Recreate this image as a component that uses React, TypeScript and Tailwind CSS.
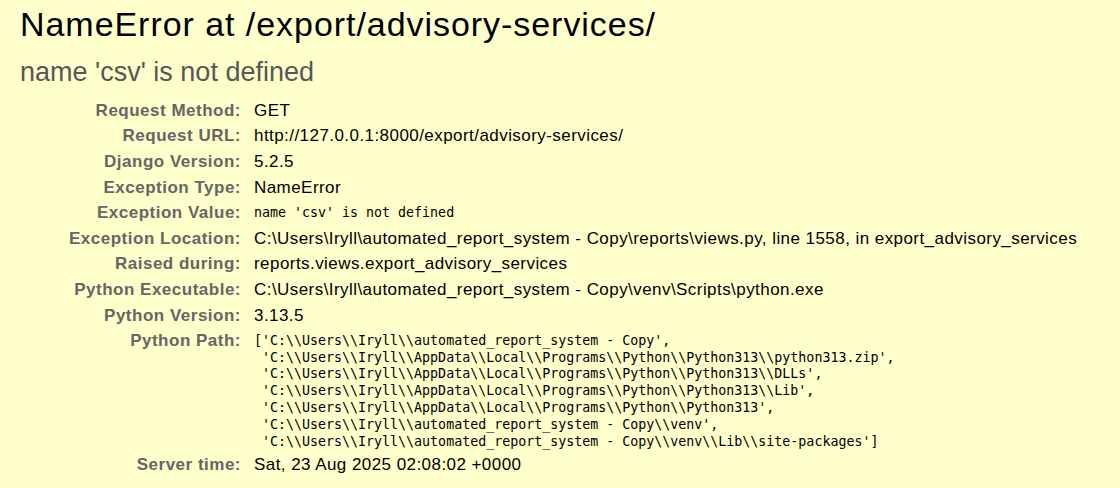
const rows: [string, string, boolean?][] = [
  ["Request Method:", "GET"],
  ["Request URL:", "http://127.0.0.1:8000/export/advisory-services/"],
  ["Django Version:", "5.2.5"],
  ["Exception Type:", "NameError"],
  ["Exception Value:", "name 'csv' is not defined", true],
  ["Exception Location:", "C:\\Users\\Iryll\\automated_report_system - Copy\\reports\\views.py, line 1558, in export_advisory_services"],
  ["Raised during:", "reports.views.export_advisory_services"],
  ["Python Executable:", "C:\\Users\\Iryll\\automated_report_system - Copy\\venv\\Scripts\\python.exe"],
  ["Python Version:", "3.13.5"],
]

const pythonPath = `['C:\\\\Users\\\\Iryll\\\\automated_report_system - Copy',
 'C:\\\\Users\\\\Iryll\\\\AppData\\\\Local\\\\Programs\\\\Python\\\\Python313\\\\python313.zip',
 'C:\\\\Users\\\\Iryll\\\\AppData\\\\Local\\\\Programs\\\\Python\\\\Python313\\\\DLLs',
 'C:\\\\Users\\\\Iryll\\\\AppData\\\\Local\\\\Programs\\\\Python\\\\Python313\\\\Lib',
 'C:\\\\Users\\\\Iryll\\\\AppData\\\\Local\\\\Programs\\\\Python\\\\Python313',
 'C:\\\\Users\\\\Iryll\\\\automated_report_system - Copy\\\\venv',
 'C:\\\\Users\\\\Iryll\\\\automated_report_system - Copy\\\\venv\\\\Lib\\\\site-packages']`

const Row = ({label, children}: {label: string, children: React.ReactNode}) => (
    <div className="flex items-start py-[2.8px]">
        <div className="w-[241px] shrink-0 text-right font-bold text-[#666] text-[17px] tracking-[0.5px] leading-[20px]">{label}</div>
        <div className="ml-[13px] text-[17px] tracking-[0.44px] leading-[20px] text-black">{children}</div>
    </div>
)

const mono = "font-['DejaVu_Sans_Mono',monospace] text-[13.3px] tracking-normal leading-[16.9px] whitespace-pre pt-[1.5px]"

export default function App() {
    return (
        <div className="w-[1120px] h-[488px] overflow-hidden bg-[#ffffcc] font-['Liberation_Sans',Arial,sans-serif] pl-[20px] pt-[6px]">
            <h1 className="text-[34px] tracking-[0.95px] leading-[37px] font-normal text-black">NameError at /export/advisory-services/</h1>
            <p className="mt-[15px] text-[27px] leading-[28px] text-[#575757]">name 'csv' is not defined</p>
            <div className="mt-[12px] -ml-[20px]">
                {rows.map(([label, value, isMono]) => (
                    <Row key={label} label={label}>
                        {isMono ? <pre className={mono}>{value}</pre> : value}
                    </Row>
                ))}
                <Row label="Python Path:">
                    <pre className={mono + " -mb-[1.5px]"}>{pythonPath}</pre>
                </Row>
                <Row label="Server time:">Sat, 23 Aug 2025 02:08:02 +0000</Row>
            </div>
        </div>
    )
}
